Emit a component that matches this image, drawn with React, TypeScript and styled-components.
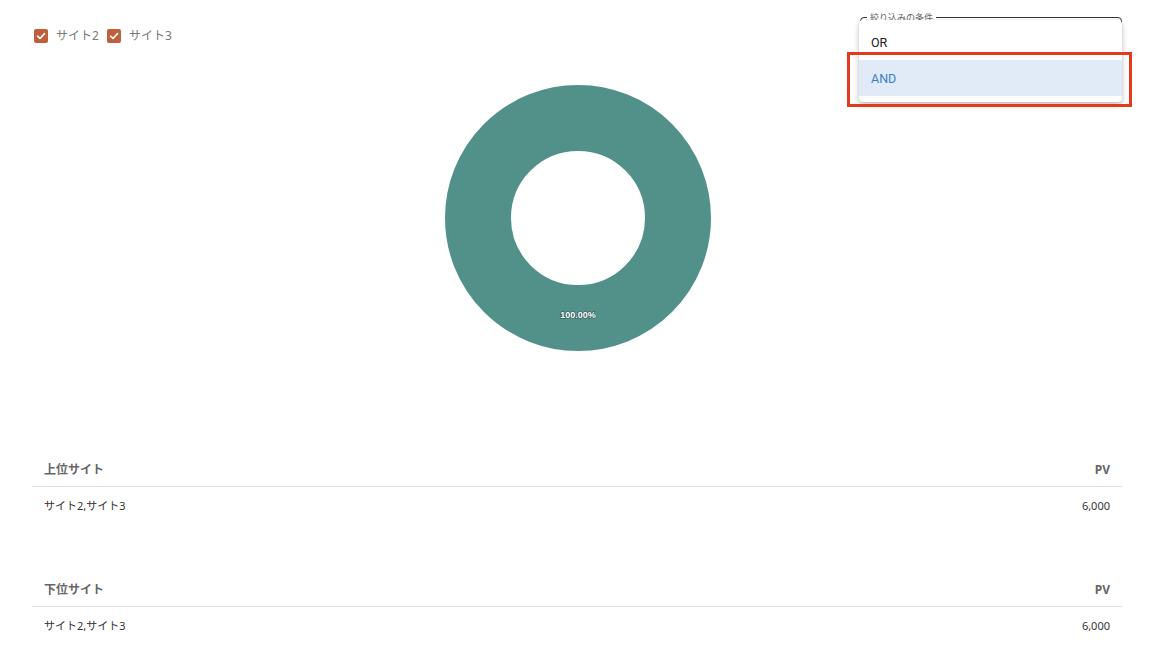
import styled, { createGlobalStyle } from 'styled-components'

const GlobalStyle = createGlobalStyle`
  html, body {
    margin: 0;
    padding: 0;
    background: #ffffff;
  }
  body {
    font-family: "Noto Sans", "Noto Sans CJK JP", sans-serif;
    color: #333333;
  }
`

const Page = styled.div`
  padding: 0 30px 0 32px;
  width: 1152px;
  box-sizing: border-box;
`

/*** TOP BAR ***/
const TopBar = styled.div`
  display: flex;
  justify-content: space-between;
  align-items: flex-start;
  padding-top: 17px;
  height: 40px;
`

const Legend = styled.div`
  display: flex;
  align-items: center;
  gap: 6px;
  margin-top: 12px;
`

const CheckItem = styled.label`
  display: flex;
  align-items: center;
  gap: 8px;
  font-size: 12px;
  color: #777777;
  line-height: 14px;
`

const Box = styled.span`
  width: 14px;
  height: 14px;
  border-radius: 2px;
  background: #c0603b;
  display: flex;
  align-items: center;
  justify-content: center;
  margin-left: 2px;
`

const SelectWrap = styled.div`
  position: relative;
  width: 262px;
  height: 40px;
  box-sizing: border-box;
  border: 1px solid #333333;
  border-radius: 4px;
`

const FloatLabel = styled.span`
  position: absolute;
  top: -6px;
  left: 6px;
  padding: 0 3px;
  background: #ffffff;
  font-size: 9px;
  line-height: 12px;
  color: #666666;
`

const Menu = styled.ul`
  position: absolute;
  top: 2px;
  left: -2px;
  right: -1px;
  margin: 0;
  padding: 4px 0 6px;
  list-style: none;
  background: #ffffff;
  border-radius: 4px;
  box-shadow: 0 3px 6px rgba(0, 0, 0, 0.2), 0 1px 3px rgba(0, 0, 0, 0.12);
  z-index: 5;
`

const MenuItem = styled.li<{ $selected?: boolean }>`
  height: 36px;
  display: flex;
  align-items: center;
  padding: 0 12px;
  font-family: Roboto, "Noto Sans", sans-serif;
  font-size: 12.5px;
  color: ${p => (p.$selected ? '#3f7ec6' : '#222222')};
  background: ${p => (p.$selected ? '#e0ebf7' : 'transparent')};
`

const Highlight = styled.div`
  position: absolute;
  top: 34px;
  left: -14px;
  width: 285px;
  height: 55px;
  box-sizing: border-box;
  border: 3px solid #e3391c;
  z-index: 6;
  pointer-events: none;
`

/*** CHART ***/
const ChartArea = styled.div`
  display: flex;
  justify-content: center;
  padding-top: 28px;
  margin-bottom: 101px;
  padding-left: 2px;
`

const PieLabel = styled.text`
  font-family: "Liberation Sans", Arial, sans-serif;
  font-size: 9px;
  font-weight: bold;
  fill: #ffffff;
  paint-order: stroke;
  stroke: rgba(0, 0, 0, 0.35);
  stroke-width: 1.5px;
`

/*** TABLES ***/
const Table = styled.div<{ $gap?: number }>`
  margin-bottom: ${p => p.$gap ?? 0}px;
`

const HeadRow = styled.div`
  display: flex;
  justify-content: space-between;
  align-items: center;
  height: 34px;
  padding: 0 12px 0 12px;
  border-bottom: 1px solid #e0e0e0;
  font-size: 12px;
  font-weight: bold;
  color: #666666;
`

const BodyRow = styled.div`
  display: flex;
  justify-content: space-between;
  align-items: center;
  height: 36px;
  padding: 0 12px 0 12px;
  font-size: 11px;
  color: #333333;
`

const Num = styled.span`
  font-family: "Noto Sans", sans-serif;
`

function Check() {
  return (
    <Box>
      <svg width="10" height="10" viewBox="0 0 10 10">
        <path d="M1.6 5.2 L4 7.5 L8.5 2.6" fill="none" stroke="#ffffff" strokeWidth="1.6" strokeLinecap="round" strokeLinejoin="round" />
      </svg>
    </Box>
  )
}

function Donut() {
  const cx = 133
  const cy = 133
  return (
    <svg width="266" height="266" viewBox="0 0 266 266">
      <circle cx={cx} cy={cy} r={100} fill="none" stroke="#52918a" strokeWidth={66} />
      <PieLabel x={cx} y={233} textAnchor="middle">100.00%</PieLabel>
    </svg>
  )
}

const rows = [
  { title: '上位サイト', name: 'サイト2,サイト3', pv: '6,000' },
  { title: '下位サイト', name: 'サイト2,サイト3', pv: '6,000' },
]

export default function App() {
  return (
    <>
      <GlobalStyle />
      <Page>
        <TopBar>
          <Legend>
            <CheckItem><Check />サイト2</CheckItem>
            <CheckItem><Check />サイト3</CheckItem>
          </Legend>
          <SelectWrap>
            <FloatLabel>絞り込みの条件</FloatLabel>
            <Menu>
              <MenuItem>OR</MenuItem>
              <MenuItem $selected>AND</MenuItem>
            </Menu>
            <Highlight />
          </SelectWrap>
        </TopBar>

        <ChartArea>
          <Donut />
        </ChartArea>

        {rows.map((r, i) => (
          <Table key={r.title} $gap={i === 0 ? 49 : 0}>
            <HeadRow>
              <span>{r.title}</span>
              <span>PV</span>
            </HeadRow>
            <BodyRow>
              <span>{r.name}</span>
              <Num>{r.pv}</Num>
            </BodyRow>
          </Table>
        ))}
      </Page>
    </>
  )
}
